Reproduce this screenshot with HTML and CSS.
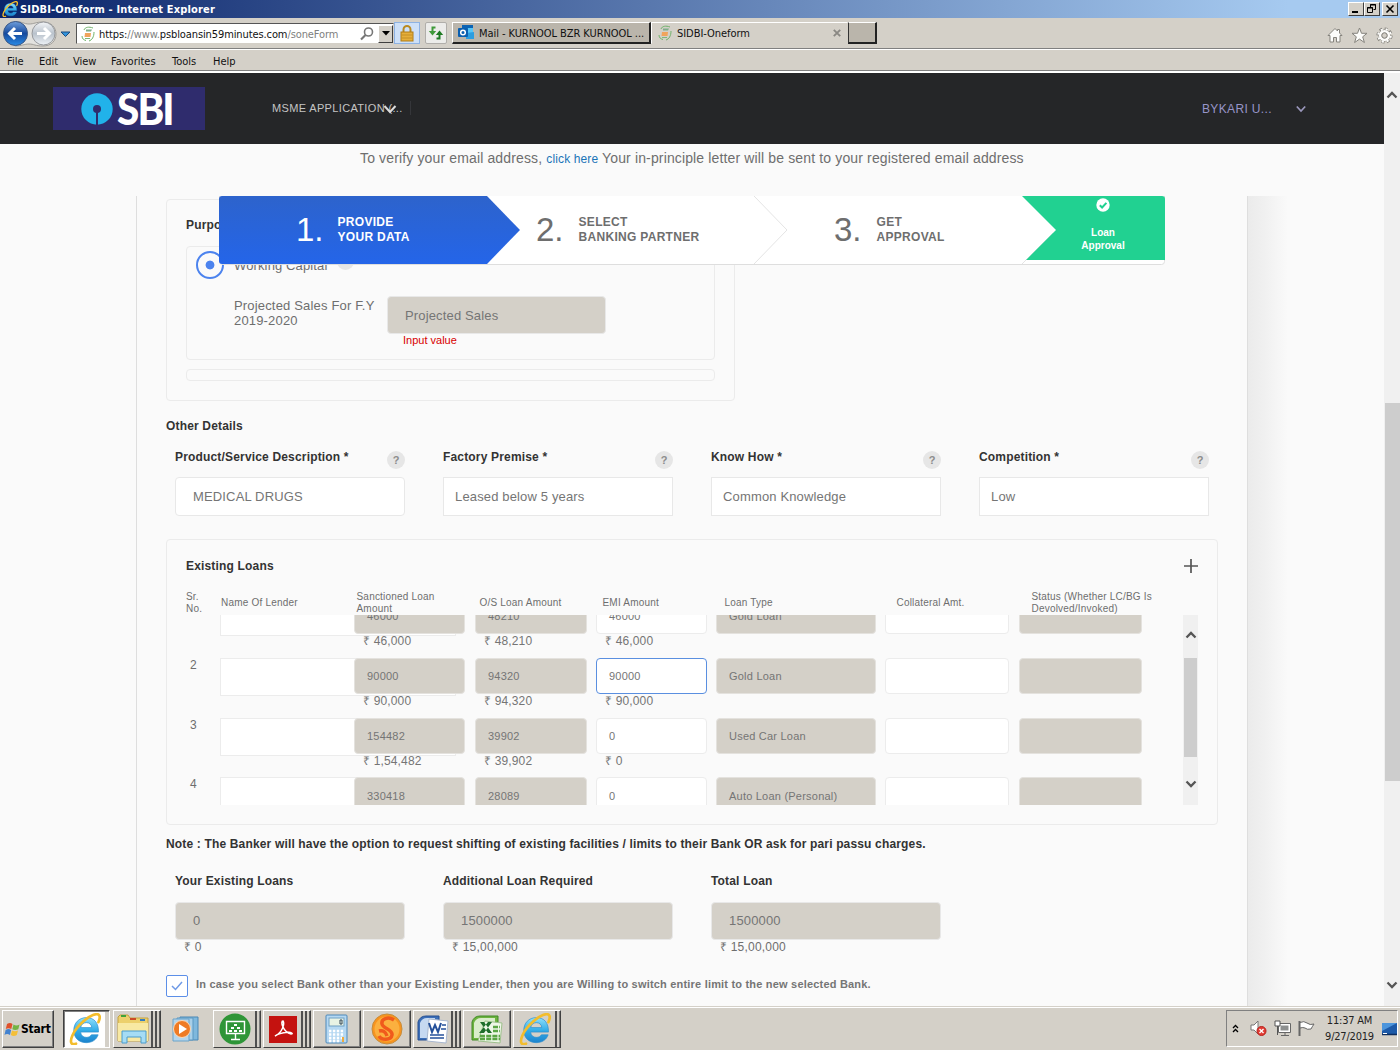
FILE: index.html
```html
<!DOCTYPE html>
<html lang="en">
<head>
<meta charset="utf-8">
<title>SIDBI-Oneform</title>
<link rel="stylesheet" href="styles.css">
</head>
<body>
<svg class="defs" width="0" height="0">
  <defs>
    <linearGradient id="ie" x1="0" y1="0" x2="0" y2="1"><stop offset="0" stop-color="#8fe0fb"/><stop offset=".5" stop-color="#35aee8"/><stop offset="1" stop-color="#1c83cd"/></linearGradient>
    <linearGradient id="nav" x1="0" y1="0" x2="0" y2="1"><stop offset="0" stop-color="#6f9edb"/><stop offset=".5" stop-color="#164a9e"/><stop offset="1" stop-color="#2a8be6"/></linearGradient>
    <linearGradient id="navoff" x1="0" y1="0" x2="0" y2="1"><stop offset="0" stop-color="#f4f6f8"/><stop offset=".5" stop-color="#b9c2cc"/><stop offset="1" stop-color="#eef2f6"/></linearGradient>
    <symbol id="ielogo" viewBox="1.500 1.500 28 28.500">
      <path d="M27.500 18.500H11.600c.3 3.200 2.400 4.700 5.100 4.700 2.200 0 3.600-.8 4.500-2.300h6c-1.600 4.600-5.400 7-10.600 7C10 27.900 5.500 23.500 5.500 17S10 5.600 16.700 5.600c7.200 0 11 4.800 10.800 12.900zM11.700 14.500h9.800c-.2-2.800-2-4.400-4.800-4.400s-4.600 1.600-5 4.400z" fill="url(#ie)" stroke="#2a8ccc" stroke-width=".6"/>
      <path d="M27.500 9.500C29.500 5 28.800 2.200 25.500 2.600 19 3.300 8 13 4.300 21.500c-2.500 5.700-1.300 9 3.200 7.300" fill="none" stroke="#f3bd2c" stroke-width="2.400" stroke-linecap="round"/>
    </symbol>
    <symbol id="sidbi" viewBox="0 0 14 16">
      <path d="M3 4C4 1 8 .5 12 2M1 10c0 3 2 4 4 4.500M13 6c0 5-2 8-5 9" fill="none" stroke="#6fb36a" stroke-width="1"/>
      <path d="M5 3.500h6l-1 2H5z" fill="#7fae8a"/><path d="M4 7h6l-.5 4H3.500z" fill="#f0a45c"/><path d="M4 12.500h5" stroke="#7fb77a"/>
    </symbol>
    <symbol id="up" viewBox="0 0 12 8"><path d="M1.500 6.500L6 2l4.500 4.500" fill="none" stroke="#555" stroke-width="2.300"/></symbol>
    <symbol id="down" viewBox="0 0 12 8"><path d="M1.500 1.500L6 6l4.500-4.500" fill="none" stroke="#555" stroke-width="2.300"/></symbol>
  </defs>
</svg>

<header class="titlebar">
  <svg class="title-icon" width="16" height="16"><use href="#ielogo"/></svg>
  <span class="title-text">SIDBI-Oneform - Internet Explorer</span>
  <div class="winbtns">
    <span class="winbtn"><svg width="12" height="10"><path d="M2 8h6" stroke="#000" stroke-width="2"/></svg></span>
    <span class="winbtn"><svg width="12" height="10"><path d="M4.500 3.500v-3h5v5h-2M4 1h6M1.500 3.500h5v5h-5zM1 4h6" fill="none" stroke="#000"/></svg></span>
    <span class="winbtn close"><svg width="12" height="10"><path d="M2.500 1.500l7 7M9.500 1.500l-7 7" stroke="#000" stroke-width="1.600"/></svg></span>
  </div>
</header>

<div class="toolbar">
  <svg class="nav-buttons" width="74" height="30" viewBox="0 0 74 30">
    <path d="M15 2.500C22 2.500 24 5 29 5s7-2 14-2c8 0 13 5 13 12s-5 12-13 12-9-2-14-2-7 2-14 2z" fill="#e3e2df" stroke="#a09e99"/>
    <circle cx="15.500" cy="14.500" r="12" fill="url(#nav)" stroke="#3a5785"/>
    <path d="M22 14.500H10M15 9L9.500 14.500l5.500 5.500" fill="none" stroke="#fff" stroke-width="3"/>
    <circle cx="43.500" cy="14.500" r="11.500" fill="url(#navoff)" stroke="#97999d"/>
    <path d="M37 14.500h12M44 9l5.500 5.500-5.500 5.500" fill="none" stroke="#fff" stroke-width="3"/>
    <path d="M61 13h9L65.500 17.500z" fill="#3093dc" stroke="#1c4a7c"/>
  </svg>
  <div class="address">
    <svg width="14" height="16"><use href="#sidbi"/></svg>
    <span class="url">https:<i>//www.</i>psbloansin59minutes.com<i>/soneForm</i></span>
    <svg class="search" width="16" height="16"><circle cx="9.500" cy="6" r="4" fill="none" stroke="#777" stroke-width="1.600"/><path d="M6.500 9L2 13.500" stroke="#777" stroke-width="2.200"/></svg>
    <span class="combo"><svg width="8" height="5"><path d="M0 0h8L4 4.500z"/></svg></span>
  </div>
  <span class="lock"><svg width="14" height="17"><path d="M3.500 8V4.500a3.500 3.500 0 017 0V8" fill="none" stroke="#b98a22" stroke-width="2"/><rect x="1" y="7" width="12" height="9" fill="#e6af3a" stroke="#b07d17"/><path d="M1.500 10h11M1.500 13h11" stroke="#c48f25"/></svg></span>
  <span class="refresh"><svg width="16" height="14"><path d="M7.500 1.500H4.500V6" fill="none" stroke="#3f9a3a" stroke-width="2"/><path d="M.8 5h7.400L4.500 9.500z" fill="#3f9a3a"/><path d="M8.500 12.500h3V8" fill="none" stroke="#1d7a22" stroke-width="2"/><path d="M7.800 9h7.400L11.500 4.500z" fill="#1d7a22"/></svg></span>
  <div class="tab back">
    <svg width="17" height="15"><path d="M4 0h11v9H4z" fill="#2a9be0"/><path d="M4 0h11v3H4z" fill="#0c64b4"/><path d="M10 3h5v5h-5z" fill="#57c6f7"/><path d="M8 14V8l8-1v7z" fill="#2d9ee0"/><rect y="3" width="10" height="9" rx="1" fill="#0a5fb0"/><circle cx="5" cy="7.500" r="2.300" fill="none" stroke="#fff" stroke-width="1.500"/></svg>
    <span>Mail - KURNOOL BZR KURNOOL ...</span>
  </div>
  <div class="tab front">
    <svg width="14" height="16"><use href="#sidbi"/></svg>
    <span>SIDBI-Oneform</span>
    <svg class="tab-close" width="8" height="8"><path d="M.8.8l6.400 6.400M7.200.8L.8 7.200" stroke="#8a8883" stroke-width="1.900"/></svg>
  </div>
  <span class="newtab"></span>
  <div class="tools">
    <svg width="16" height="17"><path d="M8 1.500L1 8.500h2V15h3.500v-4.500h3V15H13V8.500h2L12.500 6V2.500h-2V4z" fill="#fdfdfb" stroke="#85837d"/></svg>
    <svg width="17" height="17"><path d="M8.500 1l2 5.300h5.500l-4.300 3.500 1.700 5.700-4.900-3.400-4.900 3.400 1.700-5.700L1 6.300h5.500z" fill="#fdfdfb" stroke="#85837d"/></svg>
    <svg width="17" height="17"><g stroke="#85837d" fill="none"><circle cx="8.500" cy="8.500" r="6.600" stroke-width="3" stroke-dasharray="2.900 2.280"/><circle cx="8.500" cy="8.500" r="4.500" stroke-width="3"/></g><g stroke="#fdfdfb" fill="none"><circle cx="8.500" cy="8.500" r="6.300" stroke-width="2" stroke-dasharray="2 2.948" stroke-dashoffset="-.4"/><circle cx="8.500" cy="8.500" r="4.300" stroke-width="2.600"/></g><circle cx="8.500" cy="8.500" r="2.700" fill="#d4d0c8" stroke="#85837d"/></svg>
  </div>
</div>

<nav class="menubar"><span class="m1">File</span><span class="m2">Edit</span><span class="m3">View</span><span class="m4">Favorites</span><span class="m5">Tools</span><span class="m6">Help</span></nav>

<div class="viewport">
  <div class="page">
    <div class="site-header">
      <div class="sbi">
        <svg width="32" height="32"><circle cx="16" cy="16" r="15.700" fill="#21b2ea"/><circle cx="16" cy="16" r="4" fill="#2f2c6d"/><path d="M16 16v16" stroke="#2f2c6d" stroke-width="2"/></svg>
        <span>SBI</span>
      </div>
      <div class="app-menu">MSME APPLICATION (...<svg class="app-caret" width="14" height="10"><path d="M1.500 2L7 8l5.500-6" fill="none" stroke="#dcdcdc" stroke-width="2"/></svg></div>
      <div class="user">BYKARI U...</div>
      <svg width="10" height="8"><path d="M.8 1.500L5 6l4.200-4.500" fill="none" stroke="#9b98bd" stroke-width="1.700"/></svg>
    </div>

    <p class="verify">To verify your email address, <a>click here</a> Your in-principle letter will be sent to your registered email address</p>

    <div class="stage">
      <main class="form">
        <section class="card purpose">
          <h3>Purpose</h3>
          <div class="box">
            <div class="option"><span class="radio"></span><span>Working Capital</span><span class="help small"></span></div>
            <div class="projected">
              <label>Projected Sales For F.Y<br>2019-2020</label>
              <div><div class="input off">Projected Sales</div><div class="error">Input value</div></div>
            </div>
          </div>
          <div class="box thin"></div>
        </section>

        <h3 class="other">Other Details</h3>
        <section class="fields">
          <div><div class="label"><b>Product/Service Description *</b><span class="help">?</span></div><div class="input round">MEDICAL DRUGS</div></div>
          <div><div class="label"><b>Factory Premise *</b><span class="help">?</span></div><div class="input">Leased below 5 years</div></div>
          <div><div class="label"><b>Know How *</b><span class="help">?</span></div><div class="input">Common Knowledge</div></div>
          <div><div class="label"><b>Competition *</b><span class="help">?</span></div><div class="input">Low</div></div>
        </section>

        <section class="card loans">
          <div class="loans-head"><h3>Existing Loans</h3><svg width="14" height="14"><path d="M7 0v14M0 7h14" stroke="#555" stroke-width="1.700"/></svg></div>
          <div class="heads">
            <span>Sr.<br>No.</span><span>Name Of Lender</span><span>Sanctioned Loan<br>Amount</span><span>O/S Loan Amount</span><span>EMI Amount</span><span>Loan Type</span><span>Collateral Amt.</span><span>Status (Whether LC/BG Is<br>Devolved/Invoked)</span>
          </div>
          <div class="scroller">
            <div class="rows">
              <div class="row"><span class="sr">1</span><div class="c lender"></div><div class="c off">46000<em>₹ 46,000</em></div><div class="c off">48210<em>₹ 48,210</em></div><div class="c">46000<em>₹ 46,000</em></div><div class="c off">Gold Loan</div><div class="c"></div><div class="c off"></div></div>
              <div class="row"><span class="sr">2</span><div class="c lender"></div><div class="c off">90000<em>₹ 90,000</em></div><div class="c off">94320<em>₹ 94,320</em></div><div class="c focus">90000<em>₹ 90,000</em></div><div class="c off">Gold Loan</div><div class="c"></div><div class="c off"></div></div>
              <div class="row"><span class="sr">3</span><div class="c lender"></div><div class="c off">154482<em>₹ 1,54,482</em></div><div class="c off">39902<em>₹ 39,902</em></div><div class="c">0<em>₹ 0</em></div><div class="c off">Used Car Loan</div><div class="c"></div><div class="c off"></div></div>
              <div class="row last"><span class="sr">4</span><div class="c lender"></div><div class="c off">330418</div><div class="c off">28089</div><div class="c">0</div><div class="c off">Auto Loan (Personal)</div><div class="c"></div><div class="c off"></div></div>
            </div>
            <div class="inner-bar"><svg width="12" height="8"><use href="#up"/></svg><i></i><svg width="12" height="8"><use href="#down"/></svg></div>
          </div>
        </section>

        <p class="note">Note : The Banker will have the option to request shifting of existing facilities / limits to their Bank OR ask for pari passu charges.</p>

        <section class="totals">
          <div><b>Your Existing Loans</b><div class="input off">0</div><em>₹ 0</em></div>
          <div><b>Additional Loan Required</b><div class="input off">1500000</div><em>₹ 15,00,000</em></div>
          <div><b>Total Loan</b><div class="input off">1500000</div><em>₹ 15,00,000</em></div>
        </section>

        <div class="consent"><span class="check"><svg width="12" height="10"><path d="M1 5l3.500 3.500L11 1" fill="none" stroke="#6f9ae6" stroke-width="1.500"/></svg></span><span>In case you select Bank other than your Existing Lender, then you are Willing to switch entire limit to the new selected Bank.</span></div>
      </main>
      <div class="form-shade"></div>

      <div class="stepper">
        <svg class="shapes" width="946" height="69">
          <defs><linearGradient id="blue" x1="0" y1="0" x2="0" y2="1"><stop offset="0" stop-color="#2d63cc"/><stop offset="1" stop-color="#2465e9"/></linearGradient></defs>
          <rect x=".5" y="-4" width="945" height="72.500" rx="3" fill="#fff" stroke="#dedede"/>
          <path d="M3 0H268l33 34-33 34H3q-3 0-3-3V3q0-3 3-3z" fill="url(#blue)"/>
          <path d="M535 0l33 34-33 34M834 37l-31 31" fill="none" stroke="#e4e4e4"/>
          <path d="M803 0h140q3 0 3 3v61H807l30-30z" fill="#21d191"/>
        </svg>
        <div class="step s1"><span class="num">1.</span><b>PROVIDE<br>YOUR DATA</b></div>
        <div class="step s2"><span class="num">2.</span><b>SELECT<br>BANKING PARTNER</b></div>
        <div class="step s3"><span class="num">3.</span><b>GET<br>APPROVAL</b></div>
        <div class="done"><svg width="14" height="14"><circle cx="7" cy="7" r="6.700" fill="#fff"/><path d="M3.800 7.200l2.300 2.300 4.300-4.600" fill="none" stroke="#21d191" stroke-width="2"/></svg><span>Loan<br>Approval</span></div>
      </div>
    </div>
  </div>
  <div class="page-bar"><svg width="12" height="8"><use href="#up"/></svg><i></i><svg width="12" height="8"><use href="#down"/></svg></div>
</div>

<footer class="taskbar">
  <div class="start"><svg width="17" height="16"><path d="M3 3q3-2 5.500 0L7.300 8q-3-1.500-5.500 0z" fill="#e0512c"/><path d="M9.500 3.500q3 1.800 6 0L14.300 8.300q-3 1.500-6 0z" fill="#73b343"/><path d="M1.600 9q3-1.800 5.500 0L6 14q-3-1.800-5.500 0z" fill="#4382cf"/><path d="M8 9.500q3 1.600 6 0L12.800 14q-3 2-6 0z" fill="#f4bf38"/></svg><span>Start</span></div>
  <div class="task active"><svg width="32" height="32"><use href="#ielogo"/></svg></div>
  <div class="task three"><svg width="34" height="32"><path d="M2 28V4l2-2h8l2 3h18v23z" fill="#ecd06c" stroke="#c4a241"/><path d="M5 3h5" stroke="#3fa33b" stroke-width="2"/><path d="M14 6h6" stroke="#cc4b28" stroke-width="2"/><path d="M24 7h5" stroke="#347dc0" stroke-width="2"/><path d="M2 10h30v18H2z" fill="#f8e9a3"/><path d="M6 30V18h24v12h-5v-6H11v6z" fill="#a5dcf4" stroke="#4a9ccc"/></svg></div>
  <div class="task flat"><svg width="30" height="28"><path d="M8 2h18v23H8z" fill="#7fb8dd" stroke="#4a87b4"/><path d="M5 3h16v22H5z" fill="#a7cfe9" stroke="#5b97c1"/><path d="M1 4h16v22H1z" fill="#b4d5ec" stroke="#6ba3c9"/><circle cx="10" cy="14" r="8.500" fill="#ee7b25" stroke="#fbd8b5"/><path d="M7 9v10l8-5z" fill="#fff"/></svg></div>
  <div class="task two"><svg width="32" height="32"><circle cx="16" cy="16" r="15.500" fill="#2f9537"/><path d="M7.500 8.500h18v12h-18zM16.500 21v5M12 26.500h9" fill="none" stroke="#fff" stroke-width="1.400"/><path d="M15 12h3M12 15h3M18 15h3M10 18h3M15 18h3M20 18h3" stroke="#fff" stroke-width="2"/></svg></div>
  <div class="task three"><svg width="28" height="27"><rect width="28" height="27" fill="#c4120f"/><path d="M6 20c7-3 10-12 8-15-3 0 0 11 8 13 3 0 0-2-3-1.700-7 .7-11 2.200-13 3.700z" fill="none" stroke="#fff" stroke-width="1.500"/></svg></div>
  <div class="task"><svg width="24" height="30"><rect x="1" y="1" width="21" height="28" rx="1" fill="#b5d8f2" stroke="#4c88b9"/><rect x="4" y="4" width="15" height="8" fill="#e9f3e4" stroke="#6f9fc3"/><path d="M15 6h2v4h-2z" fill="none" stroke="#345"/><path d="M4 17h15M4 20.500h15M4 24h15M4 27h11" stroke="#fff" stroke-width="2.500" stroke-dasharray="2.400 1.500"/><path d="M18 23v5" stroke="#efaa3d" stroke-width="2"/></svg></div>
  <div class="task"><svg width="32" height="32"><circle cx="16" cy="16" r="15" fill="#f8941e" stroke="#c58d3e"/><circle cx="16" cy="16" r="12.500" fill="#fbb03f"/><path d="M23 7c-6-4-13-1-12 4s11 5 10 11-11 5-13 1M8 18c4-1 7 1 8 5" fill="none" stroke="#f05a1c" stroke-width="3.500"/></svg></div>
  <div class="task three"><svg width="32" height="30"><path d="M1 26V8q2-6 8-6h13v24z" fill="#3c6fb8" stroke="#254f91"/><path d="M3 24V9q2-5 7-5h8v20z" fill="#c6d9f1"/><path d="M12 5l19 2-2 22-19-2z" fill="#fff" stroke="#a9b8cf"/><path d="M12 9l3 9 3-7 3 7 3-9" fill="none" stroke="#24509a" stroke-width="2"/><path d="M25 11h4M24 15h5M13 21h14M13 24h14" stroke="#24509a" stroke-width="1.600"/></svg></div>
  <div class="task"><svg width="32" height="30"><path d="M1 26V8q2-6 8-6h18v24z" fill="#6cb33f" stroke="#3f8a26"/><path d="M3 24V9q2-5 7-5h14v20z" fill="#d9edcb"/><path d="M14 7l17 2-2 20-22-2z" fill="#eef7e8" stroke="#9dc08c"/><path d="M9 8h4l8 11h-4zM21 8h-4L8 19h5z" fill="#1e6e2b"/><path d="M22 13h7M22 17h7M9 22h20M9 25h20" stroke="#5aa545" stroke-width="2.500" stroke-dasharray="5 1.200"/></svg></div>
  <div class="task two"><svg width="32" height="32"><use href="#ielogo"/></svg></div>
  <div class="tray">
    <svg class="chev" width="7" height="9"><path d="M1 4l2.500-2.500L6 4M1 8l2.500-2.500L6 8" fill="none" stroke="#000" stroke-width="1.300"/></svg>
    <svg class="vol" width="17" height="17"><path d="M1 5h3l4-4v13l-4-4H1z" fill="#fff" stroke="#777"/><circle cx="11.500" cy="11" r="4.500" fill="#e23b33" stroke="#b6221c"/><path d="M9.500 9l4 4M13.500 9l-4 4" stroke="#fff" stroke-width="1.300"/></svg>
    <svg class="net" width="17" height="17"><path d="M4.500 3.500h12v9h-12z" fill="#fff" stroke="#666"/><path d="M6.500 5.500h8v5h-8z" fill="#8d8f8f"/><path d="M7 15.500h8M11 13v2" fill="none" stroke="#666"/><path d="M1 1h5v5H1zM3.500 6v9" fill="#fff" stroke="#555"/></svg>
    <svg class="flag" width="17" height="17"><path d="M1.500 1v15" stroke="#666" stroke-width="2"/><path d="M2 2.500q4-2 7 .5t7 1q-2 3-3 5-4 1-6-1-2-1-5 0z" fill="#fff" stroke="#666"/></svg>
    <div class="clock">11:37 AM<br>9/27/2019</div>
    <svg width="15" height="14"><path d="M0 1h15v11H0z" fill="#1d5aa8"/><path d="M0 1h15L0 9z" fill="#4c95dc"/><path d="M0 12.500h15" stroke="#0c2d5e" stroke-width="1.500"/><path d="M1 11.500h4" stroke="#fff"/></svg>
  </div>
</footer>
</body>
</html>
```
FILE: styles.css
```css
* { box-sizing: border-box; }
html, body { margin: 0; }
body {
  width: 1400px; height: 1050px; overflow: hidden;
  display: flex; flex-direction: column;
  background: #d4d0c8; color: #6e6e6e;
  font-family: "Liberation Sans", Arial, sans-serif; font-size: 12px;
}
svg { display: block; flex: none; }
.defs { position: absolute; }
h3, p { margin: 0; }
h3, b { font-size: 12px; font-weight: bold; letter-spacing: .17px; color: #333; }
em, i { font-style: normal; }

/* window chrome */
.titlebar, .toolbar, .menubar, .taskbar { font-family: "DejaVu Sans Condensed", "DejaVu Sans", sans-serif; font-stretch: condensed; font-size: 11px; color: #111; }
.titlebar {
  height: 18px; flex: none; display: flex; align-items: center; padding: 0 2px;
  background: linear-gradient(90deg, #0a246a, #a6caf0 92%);
}
.title-text { margin-left: 2px; color: #fff; font-weight: bold; font-size: 11px; letter-spacing: .16px; }
.winbtns { margin-left: auto; display: flex; }
.winbtn { width: 16px; height: 14px; background: #d4d0c8; border: 1px solid; border-color: #fff #404040 #404040 #fff; padding: 1px; }
.winbtn.close { margin-left: 2px; }

.toolbar { height: 31px; flex: none; display: flex; align-items: flex-start; border-bottom: 1px solid #808080; }
.nav-buttons { margin-top: 1px; }
.address {
  margin: 5px 0 0 2px; width: 318px; height: 21px; display: flex; align-items: center; padding-left: 4px;
  background: #fff; border: 1px solid; border-color: #555 #d4d0c8 #d4d0c8 #555;
}
.url { margin-left: 4px; padding-top: 1px; width: 257px; letter-spacing: -.1px; white-space: nowrap; }
.url i { color: #808080; }
.search { margin-left: 3px; }
.combo { width: 15px; height: 18px; margin-left: auto; display: grid; place-items: center; background: #d4d0c8; border: 1px solid; border-color: #fff #404040 #404040 #fff; }
.lock, .refresh { margin-top: 4px; height: 22px; display: grid; place-items: center; }
.lock { width: 26px; background: #cde0f8; border: 1px solid #8db2e3; }
.refresh { width: 22px; margin-left: 5px; background: #ececea; border: 1px solid #b0aeaa; border-radius: 2px; }
.tab { height: 22px; margin-top: 4px; display: flex; align-items: center; white-space: nowrap; border: 1px solid; }
.tab span { padding-top: 1px; }
.tab.back { width: 199px; margin-left: 5px; padding-left: 5px; gap: 4px; background: #bab5ab; letter-spacing: -.06px; border-color: #fff #222 #222 #fff; border-right-width: 2px; border-bottom-width: 2px; }
.tab.front { width: 197px; padding-left: 6px; gap: 5px; letter-spacing: -.05px; border-color: #fff transparent transparent #fff; }
.tab-close { margin: 0 6px 0 auto; }
.newtab { width: 29px; height: 22px; margin-top: 4px; background: #bab5ab; border: 1px solid; border-color: #fff #222 #222 #333; border-bottom-width: 2px; border-right-width: 2px; }
.tools { margin: 9px 7px 0 auto; display: flex; gap: 8px; }

.menubar { height: 24px; flex: none; display: flex; align-items: center; padding: 2px 0 0 7px; border-top: 1px solid #fff; border-bottom: 2px solid #fff; box-shadow: inset 0 -1px #808080; }
.m1 { width: 32px; } .m2 { width: 34px; } .m3 { width: 38px; } .m4 { width: 61px; } .m5 { width: 41px; }

/* page */
.viewport { height: 933px; flex: none; display: flex; background: #fafafa; }
.page { width: 1384px; display: flex; flex-direction: column; }
.site-header { height: 71px; flex: none; display: flex; align-items: center; background: #252628; padding-left: 53px; }
.sbi { width: 152px; height: 43px; display: flex; align-items: center; padding-left: 28px; gap: 4px; background: #2f2c6d; color: #fff; }
.sbi span { font-family: Lato, "Open Sans", sans-serif; font-weight: 900; font-size: 43px; line-height: 43px; letter-spacing: -2px; transform: scaleX(.94); transform-origin: left; }
.app-menu { position: relative; margin: -2px 0 0 67px; width: 139px; border-right: 1px solid #35363a; font-size: 11px; letter-spacing: .35px; color: #c4c4c4; line-height: 14px; white-space: nowrap; }
.app-caret { position: absolute; left: 111px; top: 3px; }
.user { margin-left: 791px; width: 94px; font-size: 12px; letter-spacing: .35px; color: #9895c9; }

.verify { height: 52px; flex: none; padding-left: 360px; line-height: 29px; font-size: 14px; letter-spacing: .14px; white-space: nowrap; }
.verify a { color: #1a75b8; font-size: 12px; letter-spacing: .13px; }

.stage { position: relative; flex: 1; display: flex; overflow: hidden; }
.form { width: 1112px; margin-left: 136px; padding: 3px 29px 0; border: 1px solid #dedede; border-width: 0 1px; }
.form-shade { width: 40px; background: linear-gradient(90deg, #ebebeb, #f0f0f0 40%, #fafafa); }
.card { border: 1px solid #ebebeb; border-radius: 4px; }
.purpose { width: 569px; height: 202px; padding: 0 19px; }
.purpose h3 { line-height: 20px; padding-top: 15px; height: 46px; }
.box { height: 114px; border: 1px solid #ebebeb; border-radius: 4px; }
.box.thin { height: 12px; margin-top: 9px; }
.option { display: flex; align-items: center; height: 36px; padding-left: 9px; font-size: 13px; letter-spacing: .13px; }
.radio { width: 28px; height: 28px; margin-right: 10px; border: 2px solid #4c83ee; border-radius: 50%; background: radial-gradient(circle, #4c83ee 4px, transparent 4.800px); }
.help { width: 18px; height: 18px; border-radius: 50%; background: #e6e6e6; display: grid; place-items: center; font-size: 11px; font-weight: bold; color: #8c8c8c; }
.help.small { margin: -8px 0 0 10px; width: 17px; height: 17px; }
.projected { display: flex; padding: 13px 0 0 47px; font-size: 13px; letter-spacing: .17px; line-height: 15px; }
.projected label { width: 153px; padding-top: 2px; }
.projected .input { width: 219px; height: 38px; line-height: 37px; }
.error { color: #d80000; font-size: 11px; letter-spacing: 0; line-height: 13px; padding-left: 16px; }

.input { height: 39px; line-height: 37px; padding-left: 11px; background: #fff; border: 1px solid #e8e8e8; font-size: 13px; letter-spacing: .15px; color: #757575; white-space: nowrap; }
.input.round { border-radius: 4px; padding-left: 17px; }
.input.off { background: #d4d0c8; border-radius: 4px; padding-left: 17px; }
.other { margin-top: 15px; line-height: 20px; height: 30px; }
.fields { display: grid; grid-template-columns: repeat(4, 230px); gap: 38px; padding-left: 9px; height: 93px; }
.label { height: 31px; display: flex; justify-content: space-between; padding-top: 4px; }
.label b { line-height: 15px; }
.label .help { margin-top: 1px; }

.loans { height: 286px; padding: 0 19px; }
.loans-head { display: flex; justify-content: space-between; align-items: center; padding: 17px 0 0; height: 34px; }
.heads { display: grid; grid-template-columns: 35px 135.500px 123px 123px 122px 172px 135px 130px; align-items: center; height: 41px; padding-top: 17px; font-size: 10px; line-height: 12px; letter-spacing: .2px; white-space: nowrap; }
.scroller { display: flex; height: 190px; overflow: hidden; justify-content: space-between; }
.rows { margin-top: -17px; }
.row { display: grid; grid-template-columns: 34px 134px 121px 121px 120px 169px 134px 123px; height: 60px; align-items: start; }
.row > :nth-child(3), .row > :nth-child(5) { width: 111px; }
.row > :nth-child(4) { width: 112px; }
.row > :nth-child(6) { width: 160px; }
.row > :nth-child(7) { width: 124px; }
.sr { padding-left: 4px; line-height: 14px; font-size: 12px; }
.c { height: 36px; line-height: 35px; padding-left: 12px; background: #fff; border: 1px solid #ececec; border-radius: 4px; font-size: 11px; letter-spacing: .22px; color: #757575; white-space: nowrap; }
.c.off { background: #d4d0c8; border-color: #e4e2de; }
.c.focus { border-color: #5a8fe0; }
.c.lender { width: 236px; height: 38px; border-radius: 0; }
.c em { display: block; margin-left: -4px; line-height: 15px; font-size: 12px; letter-spacing: .15px; }
.row.last { margin-top: -1px; }
.row.last .c { line-height: 37px; }
.inner-bar, .page-bar { display: flex; flex-direction: column; align-items: center; background: #f0f0f0; }
.inner-bar { width: 15px; padding-top: 16px; }
.inner-bar i { width: 13px; height: 99px; margin: 19px 0 23px; background: #cdcdcd; }

.note { margin-top: 9px; line-height: 20px; font-weight: bold; font-size: 12px; letter-spacing: .16px; color: #333; white-space: nowrap; }
.totals { display: grid; grid-template-columns: repeat(3, 230px); gap: 38px; padding: 20px 0 0 9px; height: 121px; }
.totals b { display: block; line-height: 15px; margin-bottom: 13px; }
.totals .input { height: 38px; line-height: 36px; }
.totals em { display: block; line-height: 15px; padding-left: 9px; letter-spacing: .2px; }
.consent { display: flex; gap: 8px; font-size: 11px; font-weight: bold; line-height: 18px; letter-spacing: .195px; color: #757575; white-space: nowrap; }
.check { width: 22px; height: 22px; border: 1px solid #5c8fe8; border-radius: 2px; display: grid; place-items: center; background: #fff; }

/* progress steps, floating above the form */
.stepper { position: absolute; left: 219px; top: 0; width: 946px; height: 69px; display: flex; }
.shapes { position: absolute; left: 0; top: 0; }
.step { position: relative; display: flex; flex: none; height: 68px; align-items: center; }
.num { font-size: 33px; line-height: 68px; }
.step b { color: inherit; line-height: 15px; letter-spacing: .3px; white-space: nowrap; }
.s1 { width: 317px; padding-left: 77px; color: #fff; gap: 14px; }
.s2 { width: 298px; gap: 15px; }
.s3 { width: 203px; gap: 15px; }
.done { position: relative; flex: none; width: 132px; display: flex; flex-direction: column; align-items: center; padding: 2px 0 0; color: #fff; font-size: 10px; font-weight: bold; line-height: 13px; text-align: center; gap: 14px; }

.page-bar { width: 16px; background: #f0f0f0; padding-top: 18px; }
.page-bar i { width: 15px; height: 378px; margin: 304px 0 200px; background: #cdcdcd; }

/* taskbar */
.taskbar { height: 44px; flex: none; display: flex; align-items: flex-start; padding: 3px 0 0 2px; border-top: 1px solid #d4d0c8; box-shadow: inset 0 1px #fff; }
.start { width: 52px; height: 38px; margin-right: 9px; display: flex; align-items: center; gap: 0; padding-left: 1px; font-weight: bold; font-size: 12px; letter-spacing: -.2px; color: #000; border: 1px solid; border-color: #fff #404040 #404040 #fff; box-shadow: inset -1px -1px #808080; }
.task { width: 48px; height: 38px; margin-right: 2px; display: grid; place-items: center; border: 1px solid; border-color: #fff #404040 #404040 #fff; box-shadow: inset -1px -1px #808080; }
.task.active { background: #fff; width: 47px; margin-right: 3px; padding-right: 3px; border-color: #404040 #fff #fff #404040; box-shadow: inset 1px 1px #808080, inset -4px 0 #d4d0c8; }
.task.flat { border-color: transparent; box-shadow: none; }
.task.two { border-right: 1px solid #404040; box-shadow: inset -1px 0 #808080, inset -3px 0 #d4d0c8, inset -5px 0 #505050; padding-right: 4px; }
.task.three { border-right: 1px solid #404040; box-shadow: inset -1px 0 #606060, inset -3px 0 #d4d0c8, inset -5px 0 #505050, inset -7px 0 #d4d0c8, inset -9px 0 #505050; padding-right: 8px; }
.tray { margin: 0 2px 0 auto; width: 172px; height: 37px; display: flex; align-items: center; padding-left: 5px; border: 1px solid; border-color: #808080 #fff #fff #808080; color: #222; }
.vol { margin-left: 11px; } .net { margin-left: 7px; } .flag { margin-left: 7px; }
.clock { width: 62px; margin: 1px 3px 0 5px; text-align: center; line-height: 16px; white-space: nowrap; letter-spacing: -.2px; }
```
